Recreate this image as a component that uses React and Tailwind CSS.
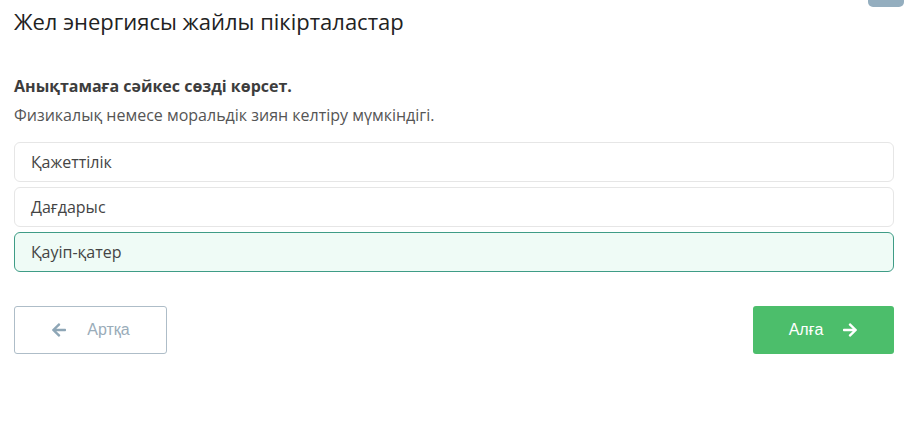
import React, { useState } from "react";
import { FaArrowLeft, FaArrowRight } from "react-icons/fa";

const OPTIONS = ["Қажеттілік", "Дағдарыс", "Қауіп-қатер"];

function App() {
  const [selected, setSelected] = useState(2);

  return (
    <div
      className="relative w-[904px] h-[427px] bg-white overflow-hidden"
      style={{ fontFamily: '"Open Sans", sans-serif' }}
    >
      {/* cut-off button at the top right */}
      <div className="absolute right-0 top-[-30px] w-[36px] h-[37px] rounded-[5px] bg-[#94aebf]" />

      <div className="px-[14px] pt-[6px]">
        <h1 className="text-[22px] leading-[30px] text-[#222]">
          Жел энергиясы жайлы пікірталастар
        </h1>

        <p className="mt-[40px] text-[16px] leading-[20px] font-bold text-[#3d3d3d]">
          Анықтамаға сәйкес сөзді көрсет.
        </p>
        <p className="mt-[9px] text-[16px] leading-[20px] text-[#555]">
          Физикалық немесе моральдік зиян келтіру мүмкіндігі.
        </p>

        <div className="mt-[17px] flex flex-col gap-[5px] w-[880px]">
          {OPTIONS.map((opt, idx) => (
            <button
              key={idx}
              onClick={() => setSelected(idx)}
              className={
                idx === selected
                  ? "h-[40px] text-left px-[16px] rounded-[6px] border border-[#3e9c86] bg-[#effbf6] text-[16px] text-[#444]"
                  : "h-[40px] text-left px-[16px] rounded-[6px] border border-[#e6e6e6] bg-white text-[16px] text-[#444]"
              }
            >
              {opt}
            </button>
          ))}
        </div>

        <div
          className="mt-[34px] flex justify-between w-[880px]"
          style={{ fontFamily: '"Liberation Sans", Arial, sans-serif' }}
        >
          <button className="w-[153px] h-[48px] flex items-center justify-center gap-[20px] rounded-[3px] border border-[#aebdc8] text-[#9aacb9] text-[16px]">
            <FaArrowLeft className="text-[#8ea6b6] text-[16px]" />
            Артқа
          </button>
          <button className="w-[141px] h-[48px] flex items-center justify-center gap-[19px] rounded-[3px] bg-[#4cbe6b] text-white text-[16px]">
            Алға
            <FaArrowRight className="text-[16px]" />
          </button>
        </div>
      </div>
    </div>
  );
}

export default App;
